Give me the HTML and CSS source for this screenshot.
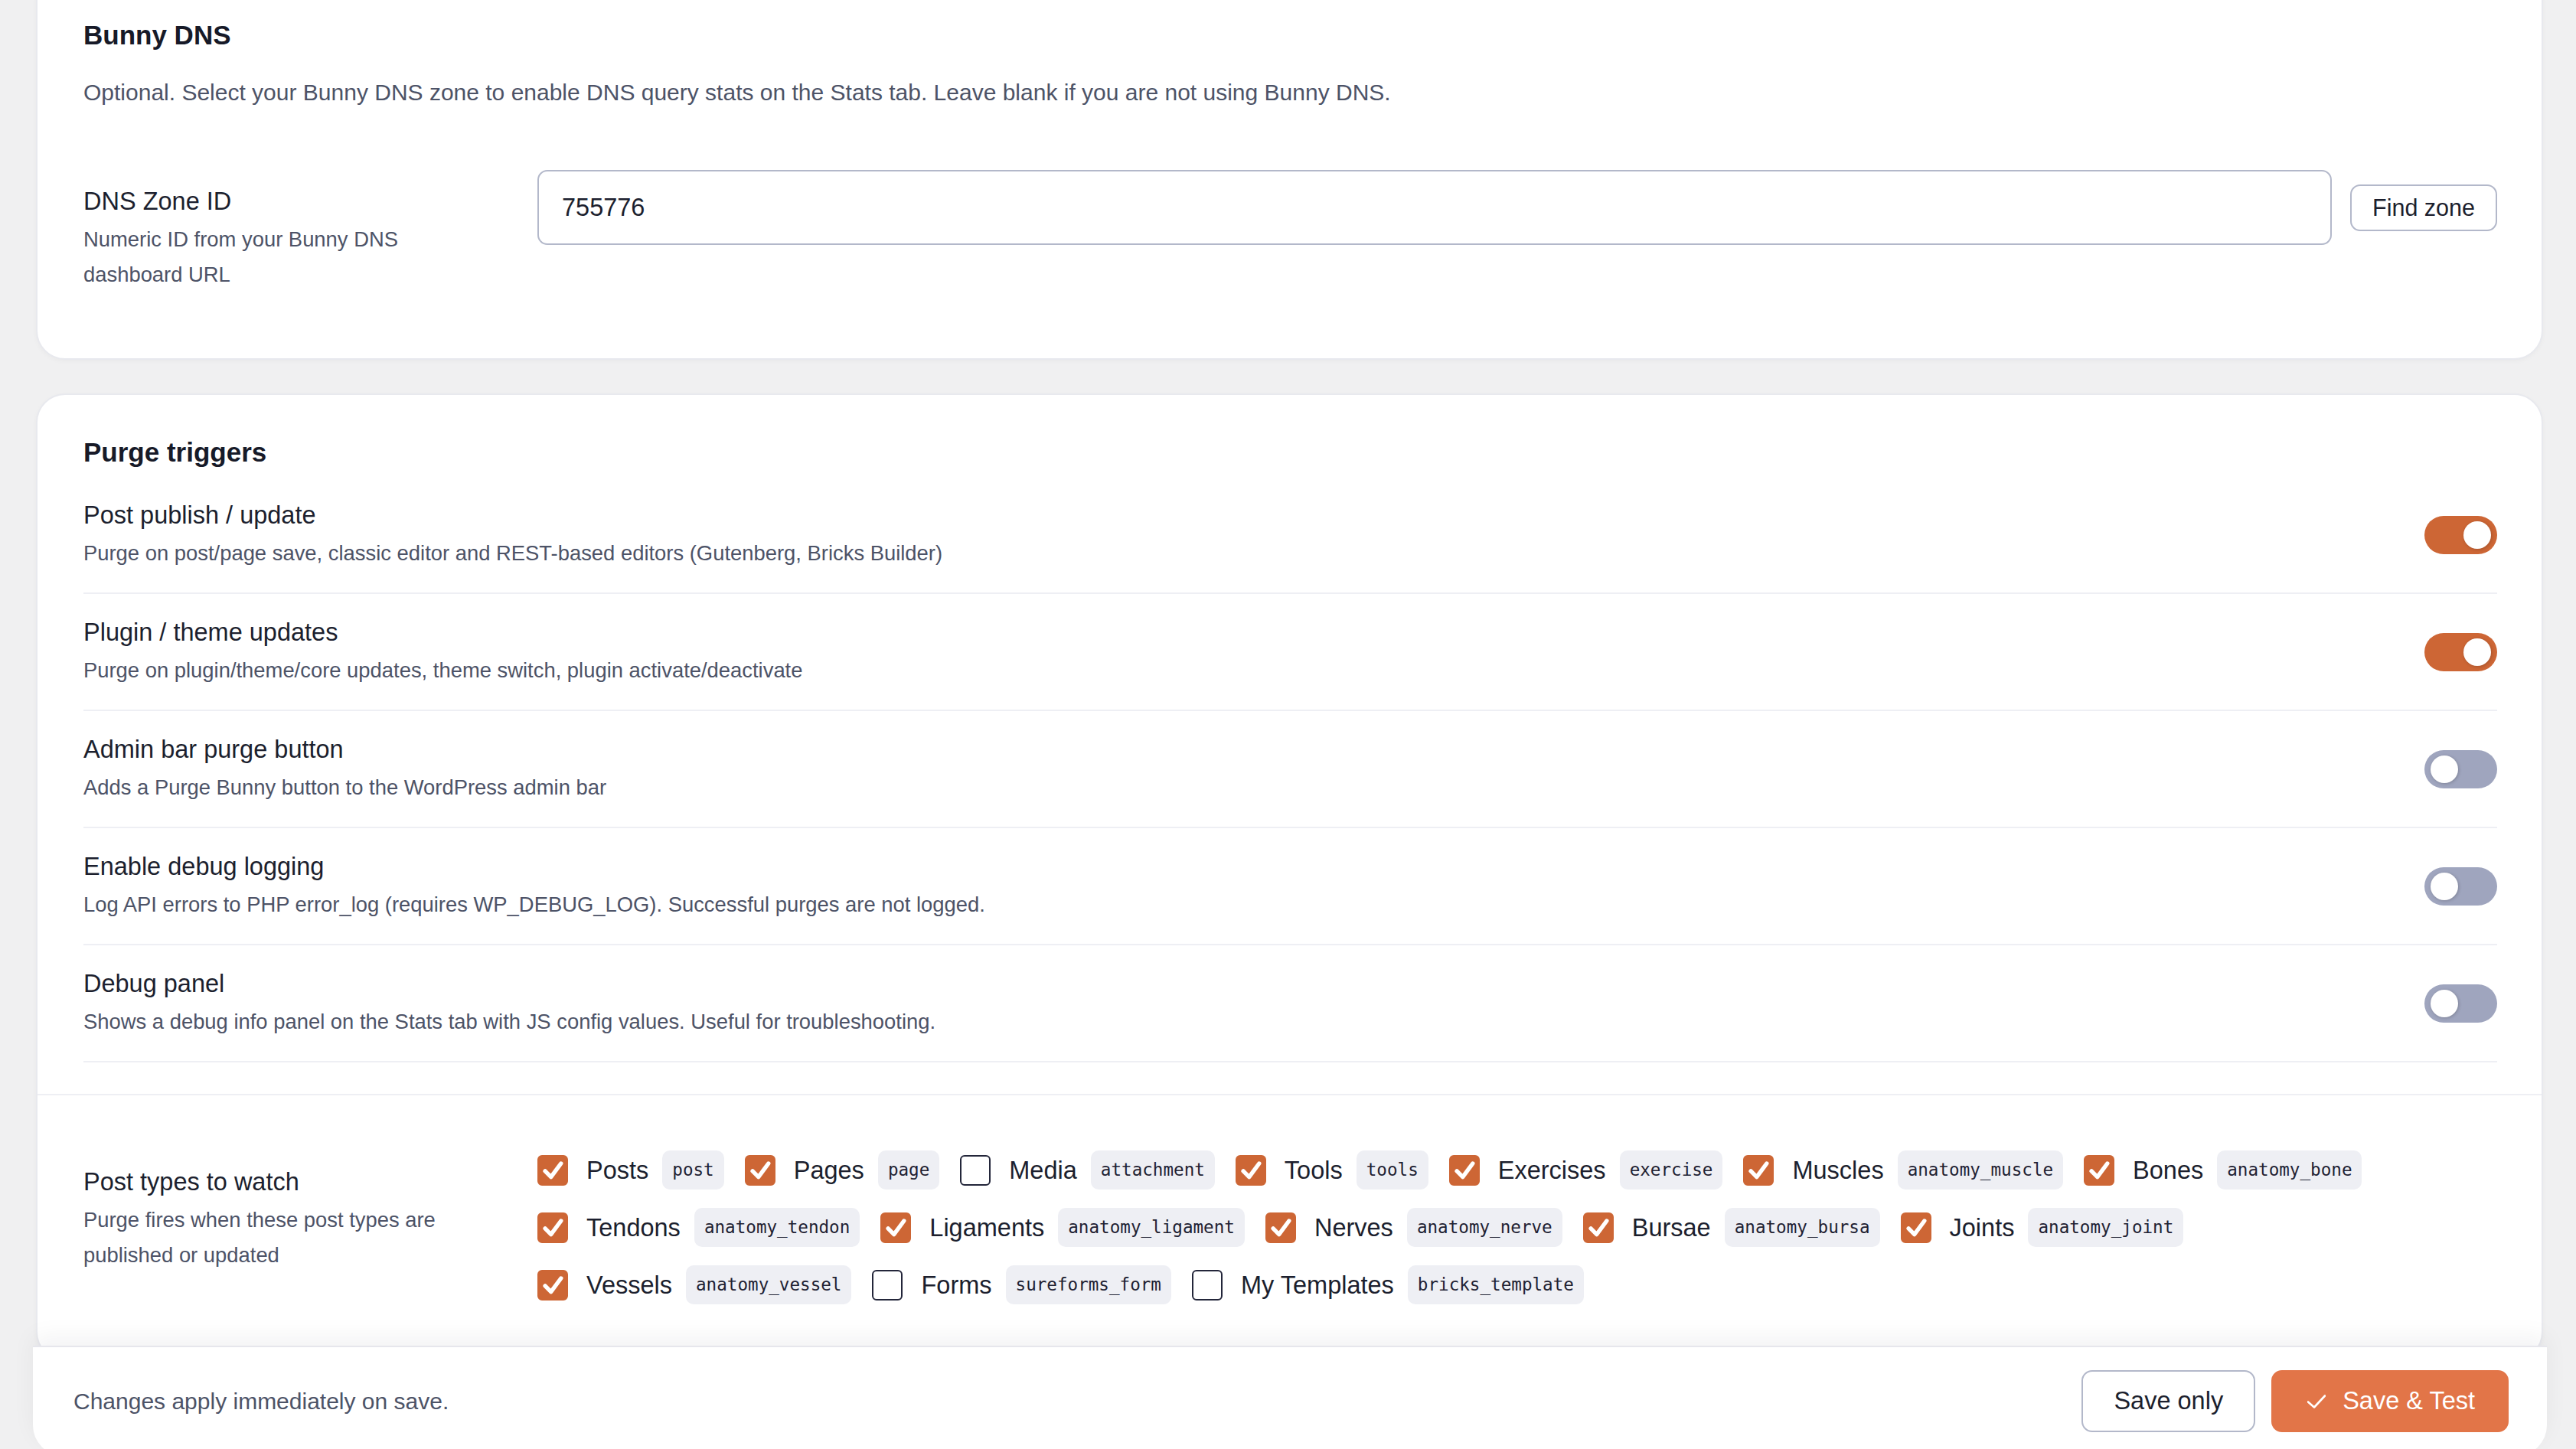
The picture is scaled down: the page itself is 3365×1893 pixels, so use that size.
FILE: index.html
```
<!DOCTYPE html>
<html lang="en">
<head>
    <meta charset="UTF-8">
    <meta name="viewport" content="width=device-width, initial-scale=1.0">
    <title>Bunny Settings</title>
    <link rel="stylesheet" href="styles.css">
</head>
<body>

<div class="wrap">

    <!-- Bunny DNS -->
    <section class="card card-first">
        <div class="card-body">
            <h2 class="card-title">Bunny DNS</h2>
            <p class="card-desc">Optional. Select your Bunny DNS zone to enable DNS query stats on the Stats tab. Leave blank if you are not using Bunny DNS.</p>

            <div class="field">
                <div class="field-label">
                    <div class="field-name">DNS Zone ID</div>
                    <div class="field-help">Numeric ID from your Bunny DNS dashboard URL</div>
                </div>
                <div class="field-control">
                    <input class="text-input" type="text" id="dnsZone" value="755776">
                    <button class="btn btn-outline btn-small">Find zone</button>
                </div>
            </div>
        </div>
    </section>

    <!-- Purge triggers -->
    <section class="card card-last">
        <div class="card-body card-body-toggles">
            <h3 class="card-title">Purge triggers</h3>

            <div class="toggle-row">
                <div>
                    <div class="row-title">Post publish / update</div>
                    <div class="row-desc">Purge on post/page save, classic editor and REST-based editors (Gutenberg, Bricks Builder)</div>
                </div>
                <span class="toggle on"></span>
            </div>
            <div class="toggle-row">
                <div>
                    <div class="row-title">Plugin / theme updates</div>
                    <div class="row-desc">Purge on plugin/theme/core updates, theme switch, plugin activate/deactivate</div>
                </div>
                <span class="toggle on"></span>
            </div>
            <div class="toggle-row">
                <div>
                    <div class="row-title">Admin bar purge button</div>
                    <div class="row-desc">Adds a Purge Bunny button to the WordPress admin bar</div>
                </div>
                <span class="toggle"></span>
            </div>
            <div class="toggle-row">
                <div>
                    <div class="row-title">Enable debug logging</div>
                    <div class="row-desc">Log API errors to PHP error_log (requires WP_DEBUG_LOG). Successful purges are not logged.</div>
                </div>
                <span class="toggle"></span>
            </div>
            <div class="toggle-row">
                <div>
                    <div class="row-title">Debug panel</div>
                    <div class="row-desc">Shows a debug info panel on the Stats tab with JS config values. Useful for troubleshooting.</div>
                </div>
                <span class="toggle"></span>
            </div>
        </div>

        <div class="card-section">
            <div class="field">
                <div class="field-label">
                    <div class="field-name">Post types to watch</div>
                    <div class="field-help">Purge fires when these post types are published or updated</div>
                </div>
                <div class="type-list">
                    <label class="ptype"><span class="check on"><svg viewBox="0 0 40 40"><path d="M9 21 L17.5 29.5 L32 10"/></svg></span><span class="ptype-name">Posts</span><code class="ptype-slug">post</code></label>
                    <label class="ptype"><span class="check on"><svg viewBox="0 0 40 40"><path d="M9 21 L17.5 29.5 L32 10"/></svg></span><span class="ptype-name">Pages</span><code class="ptype-slug">page</code></label>
                    <label class="ptype"><span class="check"></span><span class="ptype-name">Media</span><code class="ptype-slug">attachment</code></label>
                    <label class="ptype"><span class="check on"><svg viewBox="0 0 40 40"><path d="M9 21 L17.5 29.5 L32 10"/></svg></span><span class="ptype-name">Tools</span><code class="ptype-slug">tools</code></label>
                    <label class="ptype"><span class="check on"><svg viewBox="0 0 40 40"><path d="M9 21 L17.5 29.5 L32 10"/></svg></span><span class="ptype-name">Exercises</span><code class="ptype-slug">exercise</code></label>
                    <label class="ptype"><span class="check on"><svg viewBox="0 0 40 40"><path d="M9 21 L17.5 29.5 L32 10"/></svg></span><span class="ptype-name">Muscles</span><code class="ptype-slug">anatomy_muscle</code></label>
                    <label class="ptype"><span class="check on"><svg viewBox="0 0 40 40"><path d="M9 21 L17.5 29.5 L32 10"/></svg></span><span class="ptype-name">Bones</span><code class="ptype-slug">anatomy_bone</code></label>
                    <label class="ptype"><span class="check on"><svg viewBox="0 0 40 40"><path d="M9 21 L17.5 29.5 L32 10"/></svg></span><span class="ptype-name">Tendons</span><code class="ptype-slug">anatomy_tendon</code></label>
                    <label class="ptype"><span class="check on"><svg viewBox="0 0 40 40"><path d="M9 21 L17.5 29.5 L32 10"/></svg></span><span class="ptype-name">Ligaments</span><code class="ptype-slug">anatomy_ligament</code></label>
                    <label class="ptype"><span class="check on"><svg viewBox="0 0 40 40"><path d="M9 21 L17.5 29.5 L32 10"/></svg></span><span class="ptype-name">Nerves</span><code class="ptype-slug">anatomy_nerve</code></label>
                    <label class="ptype"><span class="check on"><svg viewBox="0 0 40 40"><path d="M9 21 L17.5 29.5 L32 10"/></svg></span><span class="ptype-name">Bursae</span><code class="ptype-slug">anatomy_bursa</code></label>
                    <label class="ptype"><span class="check on"><svg viewBox="0 0 40 40"><path d="M9 21 L17.5 29.5 L32 10"/></svg></span><span class="ptype-name">Joints</span><code class="ptype-slug">anatomy_joint</code></label>
                    <label class="ptype"><span class="check on"><svg viewBox="0 0 40 40"><path d="M9 21 L17.5 29.5 L32 10"/></svg></span><span class="ptype-name">Vessels</span><code class="ptype-slug">anatomy_vessel</code></label>
                    <label class="ptype"><span class="check"></span><span class="ptype-name">Forms</span><code class="ptype-slug">sureforms_form</code></label>
                    <label class="ptype"><span class="check"></span><span class="ptype-name">My Templates</span><code class="ptype-slug">bricks_template</code></label>
                </div>
            </div>
        </div>
    </section>

    <!-- Save bar, sits over the bottom of the last card -->
    <div class="savebar">
        <span class="savebar-note">Changes apply immediately on save.</span>
        <div class="savebar-actions">
            <button class="btn btn-outline">Save only</button>
            <button class="btn btn-primary"><svg class="btn-icon" viewBox="0 0 24 18"><path d="M1 9.5 L9 16.5 L23 1.5"/></svg>Save &amp; Test</button>
        </div>
    </div>

</div>

</body>
</html>
```

FILE: styles.css
```
/* Bunny settings screen */
html, body {
    height: 100%;
}
body {
    margin: 0;
    background: #f0f0f1;
    font-family: "Liberation Sans", Arial, sans-serif;
    color: #1c1f2e;
    overflow: hidden;
}
.wrap {
    padding: 0 38px 0 43px;
}
.card {
    background: #ffffff;
    border: 2px solid #e8e9ee;
    border-radius: 38px;
    box-shadow: 0 2px 6px rgba(20, 20, 40, 0.03);
    margin: 0 5px 44px 4px;
}
.card-first {
    margin-top: -36px;
}
.card-last {
    margin-bottom: 0;
}
.card-body {
    padding: 58px 58px 60px 60px;
}
.card-body-toggles {
    padding-top: 53px;
    padding-bottom: 41px;
}
.card-section {
    border-top: 2px solid #eeeff4;
    padding: 46px 58px 46px 60px;
}
.card-title {
    margin: 0;
    font-size: 35px;
    line-height: 44px;
    font-weight: bold;
    color: #171a28;
}
.card-body-toggles .card-title {
    margin-bottom: 10px;
}
.card-desc {
    margin: 30px 0 52px;
    font-size: 30px;
    line-height: 46px;
    color: #4d5367;
}

/* label / control rows */
.field {
    display: flex;
    align-items: flex-start;
    padding: 26px 0;
}
.field-label {
    flex: 0 0 593px;
    box-sizing: border-box;
    padding: 19px 80px 0 0;
}
.field-name, .row-title {
    font-size: 32.5px;
    line-height: 44px;
    color: #1c1f2e;
}
.field-help, .row-desc {
    margin-top: 5px;
    font-size: 27.4px;
    line-height: 46px;
    color: #4d5367;
}
.field-control {
    flex: 1;
    display: flex;
    align-items: center;
    gap: 24px;
}
.text-input {
    flex: 1;
    height: 98px;
    box-sizing: border-box;
    padding: 0 30px;
    border: 2px solid #b3b8ca;
    border-radius: 13px;
    font-family: inherit;
    font-size: 32.5px;
    color: #1c1f2e;
    outline: none;
}

/* buttons */
.btn {
    display: inline-flex;
    align-items: center;
    box-sizing: border-box;
    height: 81px;
    padding: 0 40px;
    border: 2px solid #b3b8ca;
    border-radius: 14px;
    background: #ffffff;
    font-family: inherit;
    font-size: 32.5px;
    color: #1c1f2e;
    cursor: pointer;
}
.btn-small {
    height: 61px;
    padding: 0 27px;
    border-radius: 13px;
    font-size: 30.5px;
}
.btn-primary {
    padding: 0 42px 0 45px;
    background: #e27548;
    border-color: #e27548;
    color: #ffffff;
}
.btn-icon {
    width: 24px;
    height: 18px;
    margin-right: 22px;
    fill: none;
    stroke: #ffffff;
    stroke-width: 2.6;
    stroke-linecap: round;
    stroke-linejoin: round;
}

/* toggles */
.toggle-row {
    display: flex;
    align-items: center;
    justify-content: space-between;
    padding: 28px 0;
    border-bottom: 2px solid #eeeff4;
}
.toggle {
    position: relative;
    flex: none;
    width: 95px;
    height: 50px;
    border-radius: 25px;
    background: #9fa5be;
}
.toggle::after {
    content: "";
    position: absolute;
    top: 7px;
    left: 8px;
    width: 36px;
    height: 36px;
    border-radius: 50%;
    background: #ffffff;
    box-shadow: 1px 1px 4px rgba(0, 0, 0, 0.2);
}
.toggle.on {
    background: #cd6635;
}
.toggle.on::after {
    left: auto;
    right: 8px;
}

/* post types */
.type-list {
    flex: 1;
    display: flex;
    flex-wrap: wrap;
    gap: 24px 27px;
}
.ptype {
    display: flex;
    align-items: center;
}
.check {
    width: 40px;
    height: 40px;
    box-sizing: border-box;
    margin-right: 24px;
    border: 2px solid #23263a;
    border-radius: 6px;
}
.check.on {
    background: #cd6635;
    border-color: #cd6635;
}
.check svg {
    display: block;
    width: 36px;
    height: 36px;
    fill: none;
    stroke: #ffffff;
    stroke-width: 6;
    stroke-linecap: round;
    stroke-linejoin: round;
}
.ptype-name {
    margin-right: 18px;
    font-size: 32.5px;
    line-height: 44px;
    color: #1c1f2e;
}
.ptype-slug {
    padding: 9px 13px;
    border-radius: 10px;
    background: #eeeff4;
    font-family: "DejaVu Sans Mono", monospace;
    font-size: 22.6px;
    line-height: 33px;
    color: #1f2233;
}

/* save bar */
.savebar {
    position: relative;
    z-index: 2;
    margin-top: -20px;
    display: flex;
    align-items: center;
    justify-content: space-between;
    padding: 30px 50px 31px 53px;
    background: #ffffff;
    border-top: 2px solid #e6e6ec;
    border-radius: 0 0 40px 40px;
    box-shadow: 0 -12px 30px rgba(20, 20, 40, 0.05);
}
.savebar-note {
    font-size: 30px;
    color: #4d5367;
}
.savebar-actions {
    display: flex;
    gap: 21px;
}
```
